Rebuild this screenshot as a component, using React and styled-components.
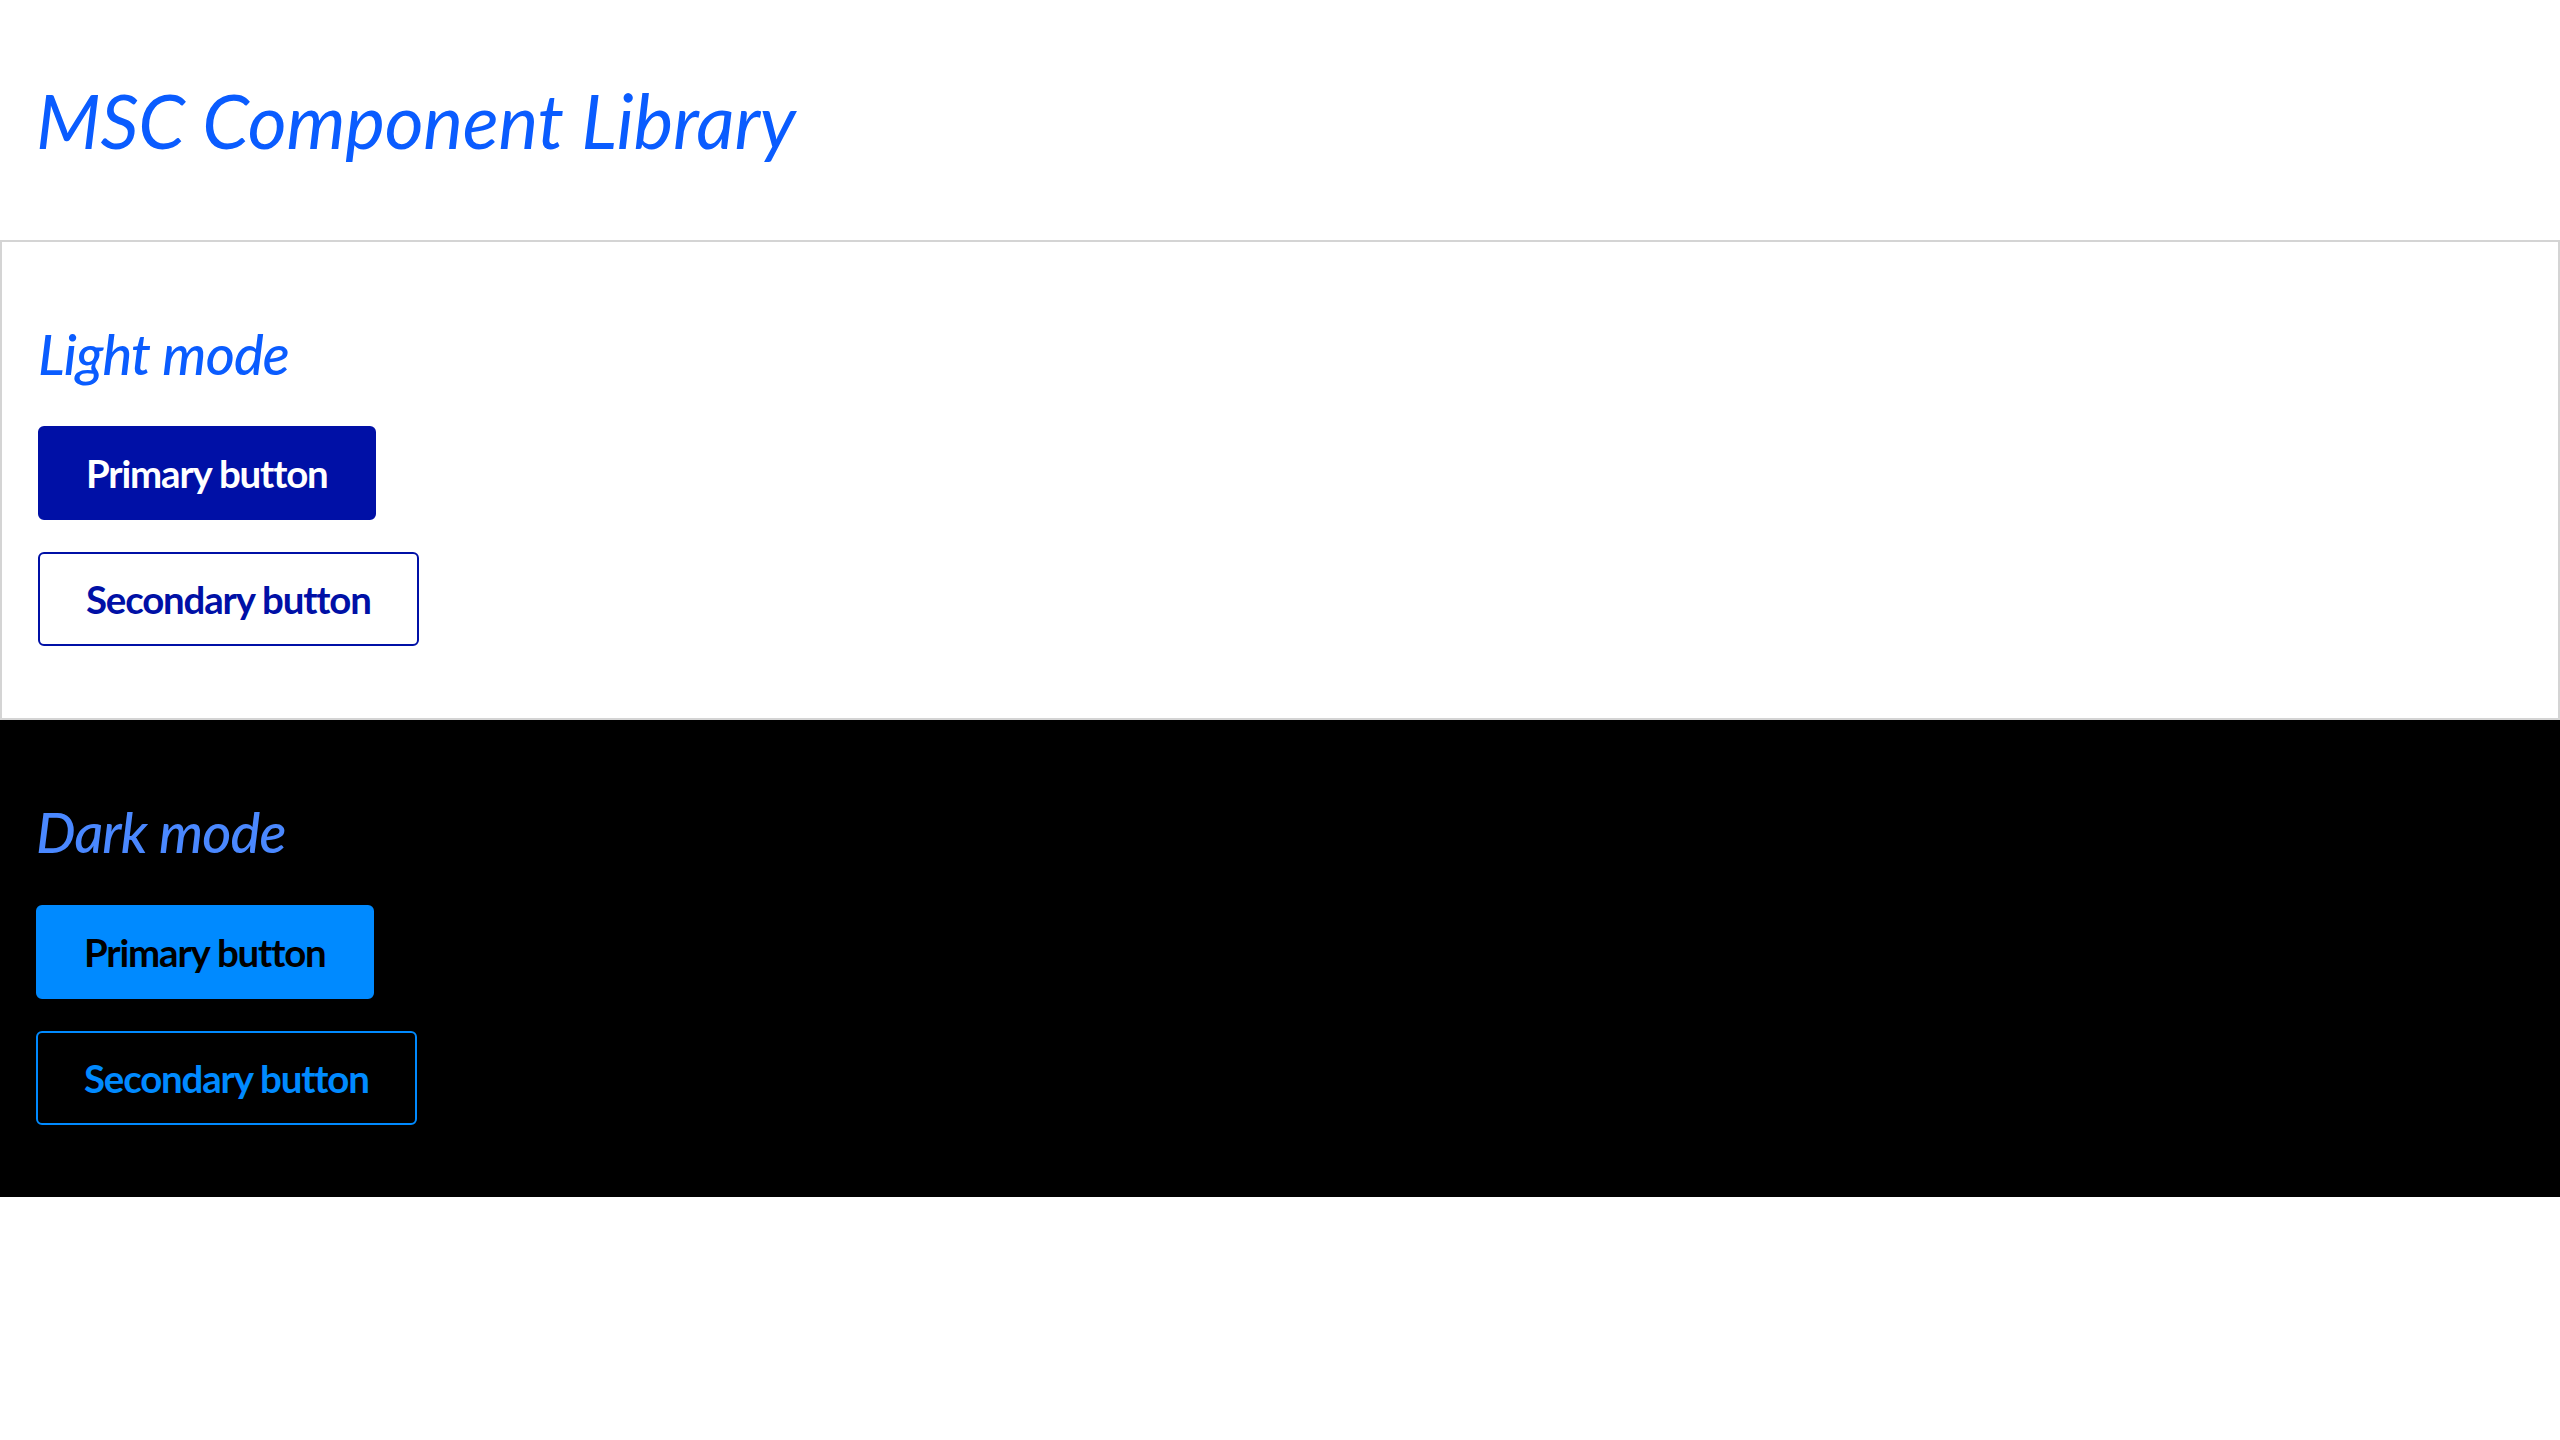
import React from "react";
import styled, { createGlobalStyle } from "styled-components";

const modes = {
  light: {
    background: "#ffffff",
    border: "2px solid #d4d4d4",
    heading: "#0a5cff",
    primaryBg: "#0010a6",
    primaryText: "#ffffff",
    secondaryText: "#0010a6",
    secondaryBorder: "#0010a6",
  },
  dark: {
    background: "#000000",
    border: "none",
    heading: "#4a88ff",
    primaryBg: "#008aff",
    primaryText: "#000000",
    secondaryText: "#008aff",
    secondaryBorder: "#008aff",
  },
};

const GlobalStyle = createGlobalStyle`
  *, *::before, *::after {
    box-sizing: border-box;
  }

  body {
    margin: 0;
    background: #ffffff;
    font-family: Lato, "Liberation Sans", sans-serif;
  }
`;

const App = () => {
  return (
    <>
      <GlobalStyle />
      <Page__main>
        <Header__header>
          <Title__h1>MSC Component Library</Title__h1>
        </Header__header>

        <ModeSection mode="light" label="Light mode" />
        <ModeSection mode="dark" label="Dark mode" />
      </Page__main>
    </>
  );
};

const ModeSection = ({ mode, label }) => {
  const theme = modes[mode];
  return (
    <Section__section $theme={theme}>
      <SectionTitle__h2 $theme={theme}>{label}</SectionTitle__h2>
      <ButtonStack__div>
        <Button__button $theme={theme} $variant="primary">
          Primary button
        </Button__button>
        <Button__button $theme={theme} $variant="secondary">
          Secondary button
        </Button__button>
      </ButtonStack__div>
    </Section__section>
  );
};

export default App;

const Page__main = styled.main`
  display: flex;
  flex-direction: column;
  width: 100%;
`;

const Header__header = styled.header`
  padding: 75px 36px 75px;
`;

const Title__h1 = styled.h1`
  margin: 0;
  font-family: Lato, "Liberation Sans", sans-serif;
  font-size: 75px;
  font-style: italic;
  font-weight: 400;
  line-height: 1.2;
  letter-spacing: -0.003em;
  color: #0a5cff;
`;

const Section__section = styled.section`
  display: flex;
  flex-direction: column;
  align-items: flex-start;
  padding: 78px 36px 72px;
  background: ${(p) => p.$theme.background};
  border: ${(p) => p.$theme.border};
`;

const SectionTitle__h2 = styled.h2`
  margin: 0 0 39px;
  font-family: Lato, "Liberation Sans", sans-serif;
  font-size: 56px;
  font-style: italic;
  font-weight: 500;
  line-height: 1.2;
  letter-spacing: -0.015em;
  color: ${(p) => p.$theme.heading};
`;

const ButtonStack__div = styled.div`
  display: flex;
  flex-direction: column;
  align-items: flex-start;
  gap: 32px;
`;

const Button__button = styled.button`
  padding: 22px 46px;
  border-radius: 6px;
  font-family: Lato, "Liberation Sans", sans-serif;
  font-size: 38.4px;
  font-weight: 700;
  line-height: 1.2;
  letter-spacing: -0.03em;
  cursor: pointer;
  border: 2px solid
    ${(p) =>
      p.$variant === "primary" ? p.$theme.primaryBg : p.$theme.secondaryBorder};
  background: ${(p) =>
    p.$variant === "primary" ? p.$theme.primaryBg : "transparent"};
  color: ${(p) =>
    p.$variant === "primary" ? p.$theme.primaryText : p.$theme.secondaryText};
`;
